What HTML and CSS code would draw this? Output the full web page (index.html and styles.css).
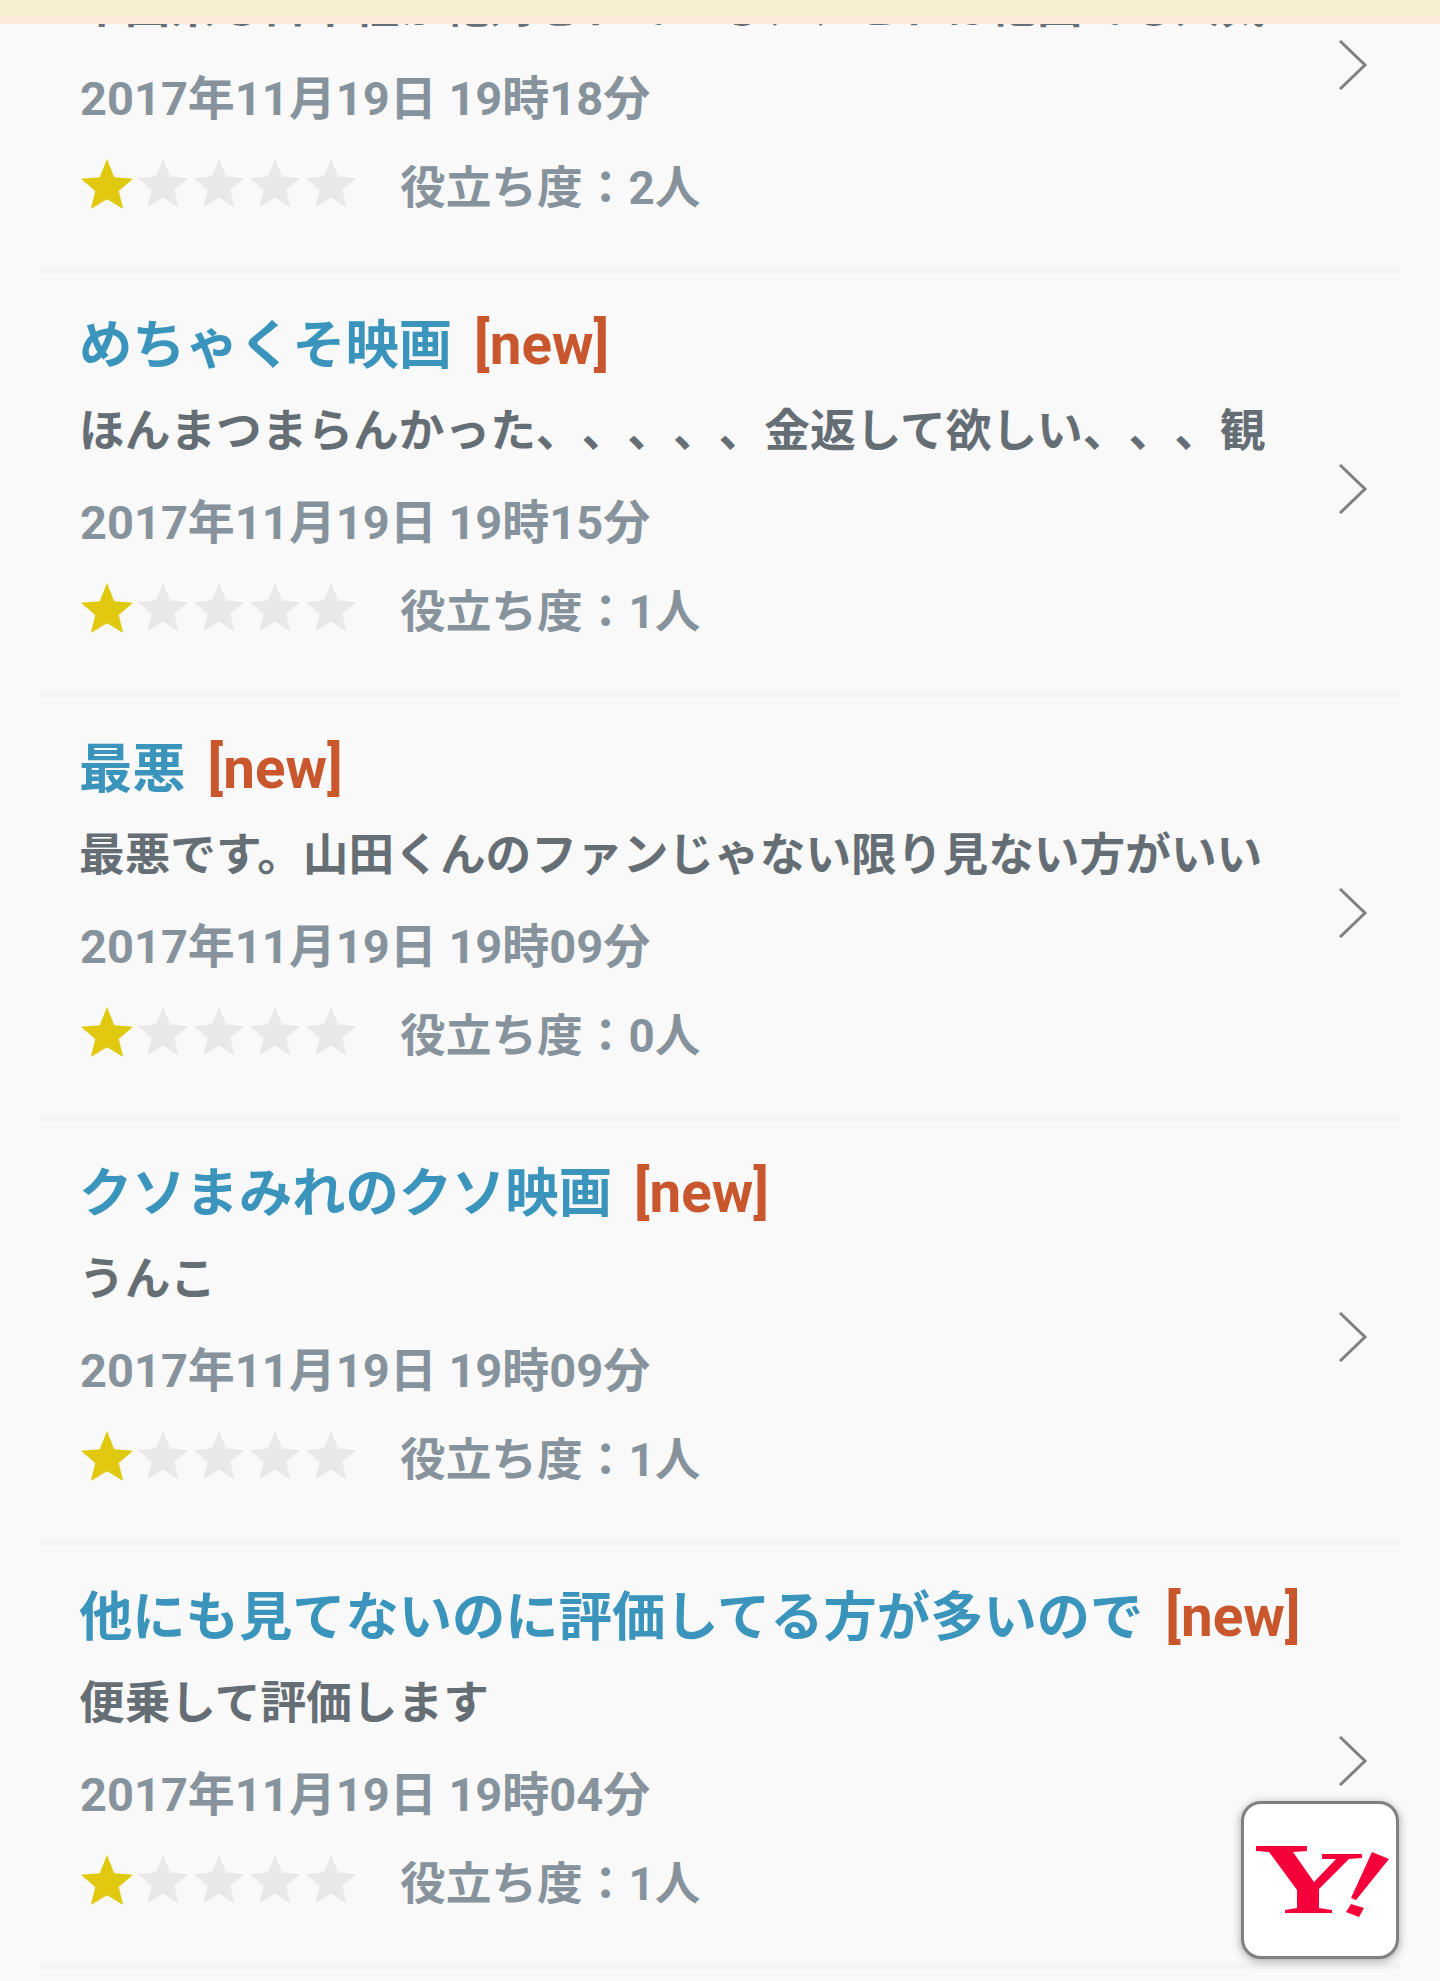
FILE: index.html
```html
<!DOCTYPE html>
<html lang="ja">
<head>
<meta charset="UTF-8">
<meta name="viewport" content="width=device-width, initial-scale=1.0">
<title>レビュー一覧</title>
<link rel="stylesheet" href="styles.css">
</head>
<body>

<svg class="defs" width="0" height="0">
    <symbol id="star" viewBox="0 0 50 48">
        <path d="M25 0l7 17.500 18 1.500-13.700 11.800 4.200 17.200-15.500-9.300-15.500 9.300 4.200-17.200L0 19l18-1.500z"/>
    </symbol>
    <symbol id="chevron" viewBox="0 0 30 50">
        <path d="M2 1l25 24L2 49" fill="none" stroke="#808080" stroke-width="3"/>
    </symbol>
</svg>

<div class="notice"></div>

<ul class="reviews">
    <li class="review">
        <div class="review-body">
            <div class="title"></div>
            <div class="text">中国系も日本社が絶対されている、、これは他国でも人気</div>
            <div class="date">2017年11月19日 19時18分</div>
            <div class="meta">
                <span class="stars"><svg class="star on"><use href="#star"/></svg><svg class="star"><use href="#star"/></svg><svg class="star"><use href="#star"/></svg><svg class="star"><use href="#star"/></svg><svg class="star"><use href="#star"/></svg></span>
                <span class="useful">役立ち度：2人</span>
            </div>
        </div>
        <svg class="chevron"><use href="#chevron"/></svg>
    </li>
    <li class="review">
        <div class="review-body">
            <div class="title"><span class="title-text">めちゃくそ映画</span><span class="new">[new]</span></div>
            <div class="text">ほんまつまらんかった、、、、、金返して欲しい、、、観</div>
            <div class="date">2017年11月19日 19時15分</div>
            <div class="meta">
                <span class="stars"><svg class="star on"><use href="#star"/></svg><svg class="star"><use href="#star"/></svg><svg class="star"><use href="#star"/></svg><svg class="star"><use href="#star"/></svg><svg class="star"><use href="#star"/></svg></span>
                <span class="useful">役立ち度：1人</span>
            </div>
        </div>
        <svg class="chevron"><use href="#chevron"/></svg>
    </li>
    <li class="review">
        <div class="review-body">
            <div class="title"><span class="title-text">最悪</span><span class="new">[new]</span></div>
            <div class="text">最悪です。山田くんのファンじゃない限り見ない方がいい</div>
            <div class="date">2017年11月19日 19時09分</div>
            <div class="meta">
                <span class="stars"><svg class="star on"><use href="#star"/></svg><svg class="star"><use href="#star"/></svg><svg class="star"><use href="#star"/></svg><svg class="star"><use href="#star"/></svg><svg class="star"><use href="#star"/></svg></span>
                <span class="useful">役立ち度：0人</span>
            </div>
        </div>
        <svg class="chevron"><use href="#chevron"/></svg>
    </li>
    <li class="review">
        <div class="review-body">
            <div class="title"><span class="title-text">クソまみれのクソ映画</span><span class="new">[new]</span></div>
            <div class="text">うんこ</div>
            <div class="date">2017年11月19日 19時09分</div>
            <div class="meta">
                <span class="stars"><svg class="star on"><use href="#star"/></svg><svg class="star"><use href="#star"/></svg><svg class="star"><use href="#star"/></svg><svg class="star"><use href="#star"/></svg><svg class="star"><use href="#star"/></svg></span>
                <span class="useful">役立ち度：1人</span>
            </div>
        </div>
        <svg class="chevron"><use href="#chevron"/></svg>
    </li>
    <li class="review">
        <div class="review-body">
            <div class="title"><span class="title-text">他にも見てないのに評価してる方が多いので</span><span class="new">[new]</span></div>
            <div class="text">便乗して評価します</div>
            <div class="date">2017年11月19日 19時04分</div>
            <div class="meta">
                <span class="stars"><svg class="star on"><use href="#star"/></svg><svg class="star"><use href="#star"/></svg><svg class="star"><use href="#star"/></svg><svg class="star"><use href="#star"/></svg><svg class="star"><use href="#star"/></svg></span>
                <span class="useful">役立ち度：1人</span>
            </div>
        </div>
        <svg class="chevron"><use href="#chevron"/></svg>
    </li>
</ul>

<div class="yahoo-button">
    <svg class="yahoo-logo" width="133" height="71" viewBox="0 0 133 71">
        <path d="M0 0H51V5L37 6 58 36 80 13 66 13V8H106V12L93 13 63 43V62L76 64V67H29V64L41 62V44L13 6 0 5z"/>
        <path d="M116 6L133 13 100 54 95 52zM95 58L108 62 103 71 90 66z"/>
    </svg>
</div>

</body>
</html>
```

FILE: styles.css
```css
html, body {
    height: 100%;
}
body {
    margin: 0;
    overflow: hidden;
    background-color: #f9f9f9;
    font-family: Roboto, "Noto Sans CJK JP", sans-serif;
    font-weight: 700;
    text-spacing-trim: space-all;
}
.defs {
    position: absolute;
}
.notice {
    position: absolute;
    top: 0;
    left: 0;
    right: 0;
    height: 24px;
    background: linear-gradient(#f6efd0 16px, #fce9da 16px);
}
.reviews {
    list-style: none;
    margin: -151px 40px 0;
    padding: 0;
}
.review {
    display: flex;
    align-items: center;
    height: 424px;
    box-sizing: border-box;
    border-bottom: 6px solid #f3f3f3;
}
.review-body {
    flex: 1;
    min-width: 0;
    display: flex;
    flex-direction: column;
    padding: 28px 0 0 39px;
    height: 100%;
    box-sizing: border-box;
}
.title {
    display: flex;
    gap: 22px;
    height: 84px;
    align-items: center;
    font-size: 53.300px;
    color: #3a94bc;
}
.title-text {
    margin-top: -5px;
}
.new {
    margin-top: 4px;
    font-size: 56.500px;
    color: #c9572d;
}
.text {
    height: 88px;
    margin-top: 3px;
    line-height: 88px;
    font-size: 45.700px;
    color: #666e75;
    white-space: nowrap;
}
.date {
    height: 88px;
    margin-top: 3px;
    margin-left: 1px;
    line-height: 88px;
    font-size: 47px;
    color: #87939c;
}
.meta {
    display: flex;
    align-items: center;
    height: 88px;
    margin-top: -3px;
    color: #87939c;
    font-size: 45.700px;
}
.stars {
    display: flex;
    width: 321px;
}
.star {
    width: 56px;
    height: 48px;
    fill: #e8e8e8;
}
.star.on {
    height: 50px;
    fill: #e0c90f;
}
.chevron {
    flex: none;
    width: 30px;
    height: 50px;
    margin: 14px 32px 0 0;
    overflow: visible;
}
.yahoo-button {
    position: absolute;
    left: 1241px;
    top: 1801px;
    width: 158px;
    height: 158px;
    box-sizing: border-box;
    display: flex;
    align-items: center;
    justify-content: center;
    background-color: #ffffff;
    border: 3px solid #808080;
    border-radius: 20px;
    box-shadow: 0 2px 10px rgba(0, 0, 0, 0.35);
}
.yahoo-logo {
    flex: none;
    margin: 3px 0 0 5px;
    fill: #f6003c;
}
```
